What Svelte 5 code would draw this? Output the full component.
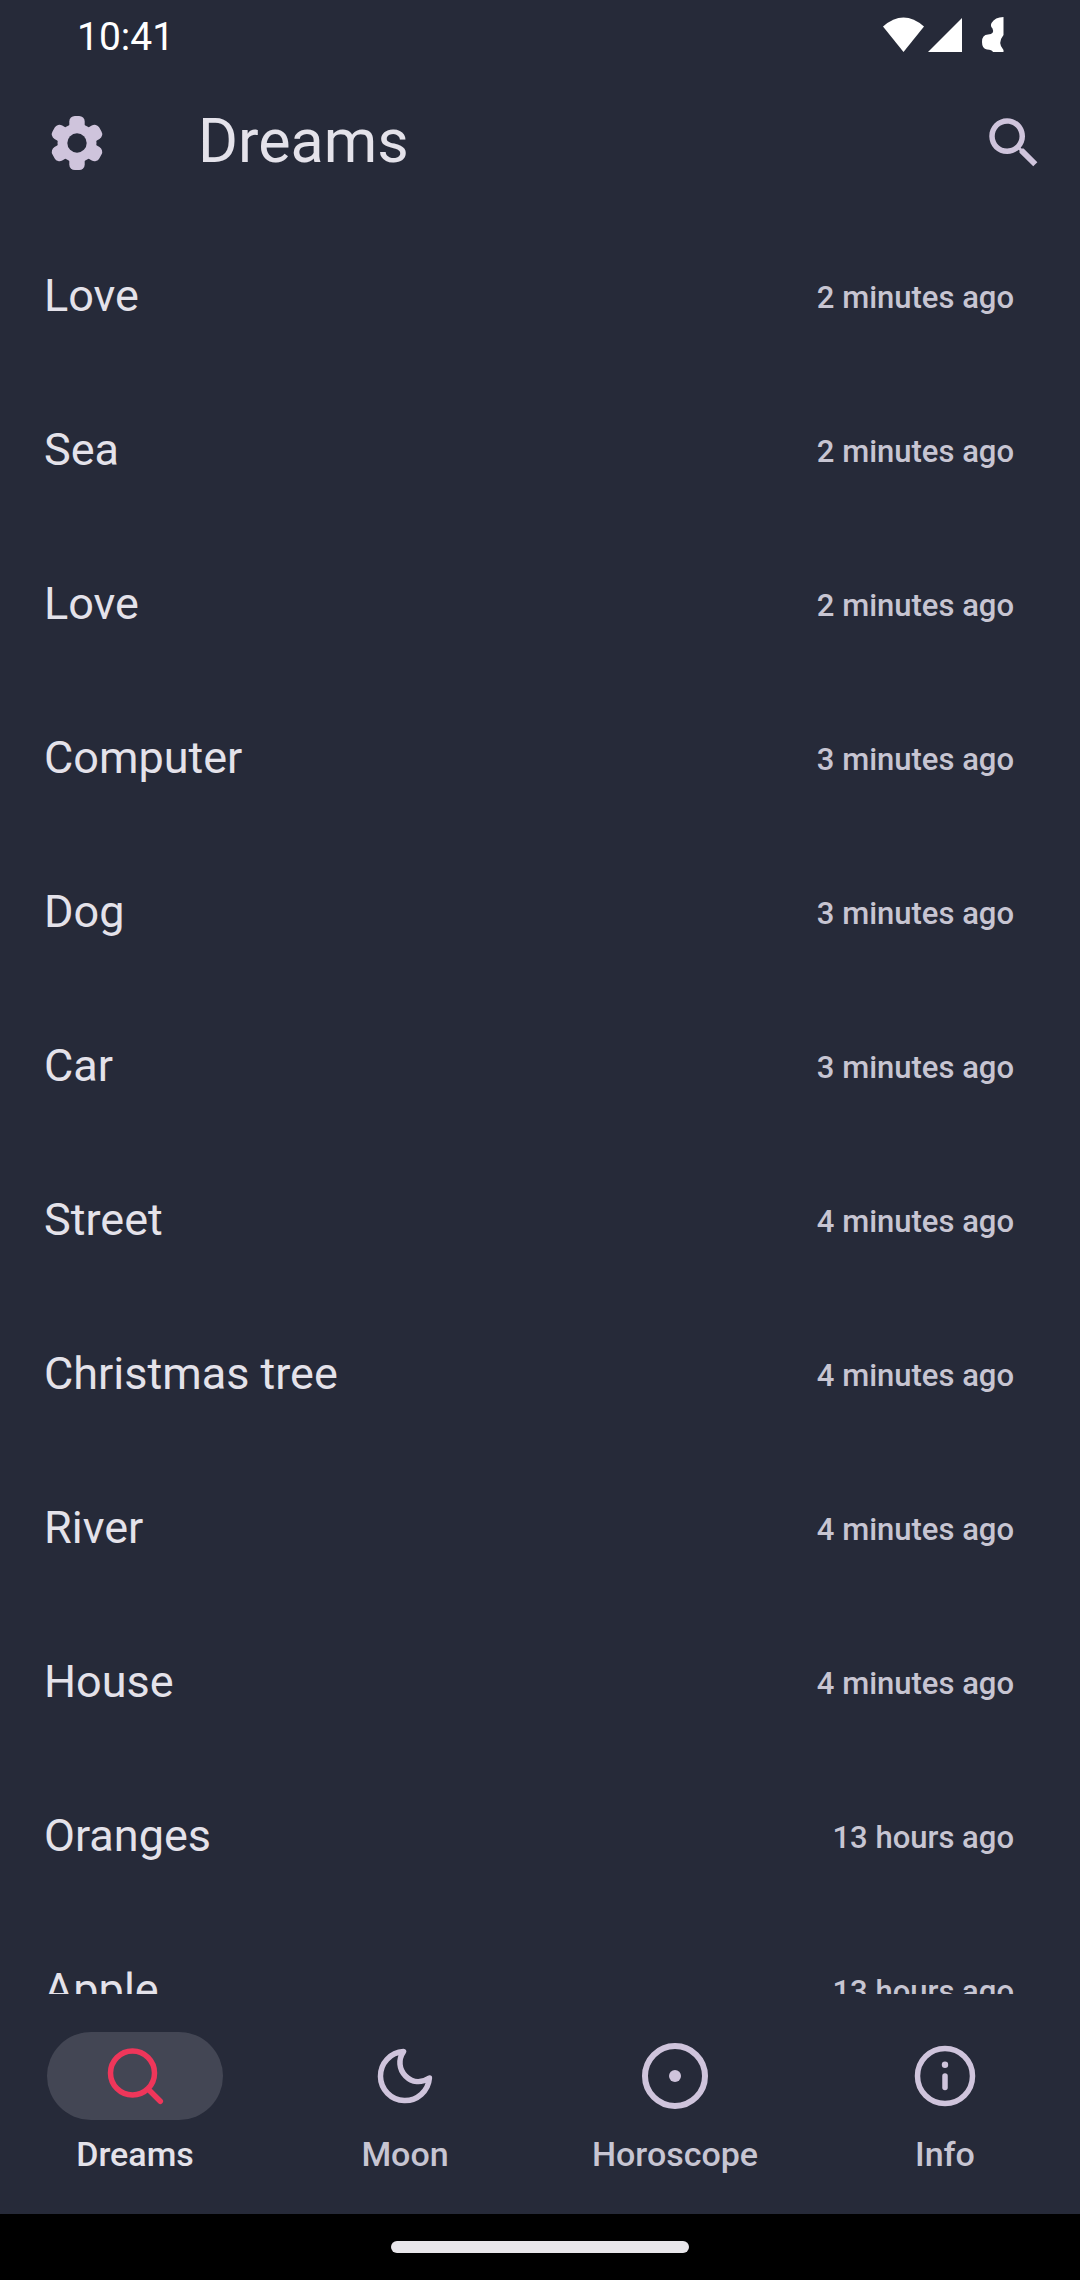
<script>
  const dreams = [
    ['Love', '2 minutes ago'],
    ['Sea', '2 minutes ago'],
    ['Love', '2 minutes ago'],
    ['Computer', '3 minutes ago'],
    ['Dog', '3 minutes ago'],
    ['Car', '3 minutes ago'],
    ['Street', '4 minutes ago'],
    ['Christmas tree', '4 minutes ago'],
    ['River', '4 minutes ago'],
    ['House', '4 minutes ago'],
    ['Oranges', '13 hours ago'],
    ['Apple', '13 hours ago'],
  ];
  const tabs = ['Dreams', 'Moon', 'Horoscope', 'Info'];
  let current = $state('Dreams');
</script>

<div class="screen">
  <div class="status">
    <span class="clock">10:41</span>
    <svg class="indicators" viewBox="0 0 122 36" aria-hidden="true">
      <path d="M0 9.500 Q20.500 -8.500 41 9.500 L20.500 35 Z" />
      <path d="M45 35 L79 1 V35 Z" />
      <path d="M120.500 0 V18 Q114 26 120.500 33 V35 H110 Q109 32.500 104 32.500 Q99 32 99 25 Q99 17.500 105 17.500 Q112 17 109.500 11.500 Q107 9 108.500 6 Q112 0 120.500 0 Z" />
    </svg>
  </div>

  <header>
    <button class="icon-button" aria-label="Settings">
      <svg viewBox="0 0 66 66">
        <mask id="gear-hole">
          <rect width="66" height="66" fill="white" />
          <circle cx="33" cy="33" r="9.700" fill="black" />
        </mask>
        <g mask="url(#gear-hole)">
          <circle cx="33" cy="33" r="19.500" />
          <rect x="25.300" y="6" width="15.400" height="54" rx="5.500" />
          <rect x="25.300" y="6" width="15.400" height="54" rx="5.500" transform="rotate(60 33 33)" />
          <rect x="25.300" y="6" width="15.400" height="54" rx="5.500" transform="rotate(120 33 33)" />
        </g>
      </svg>
    </button>
    <h1>Dreams</h1>
    <button class="icon-button" aria-label="Search">
      <svg viewBox="0 0 24 24">
        <path d="M15.5 14h-.79l-.28-.27C15.410 12.590 16 11.110 16 9.500 16 5.910 13.090 3 9.500 3S3 5.910 3 9.500 5.910 16 9.500 16c1.610 0 3.090-.59 4.230-1.570l.27.28v.79l5 4.990L20.490 19l-4.990-5zm-6 0C7.010 14 5 11.990 5 9.500S7.010 5 9.500 5 14 7.010 14 9.500 11.990 14 9.500 14z" />
      </svg>
    </button>
  </header>

  <main>
    <ul>
      {#each dreams as [name, time]}
        <li>
          <span class="name">{name}</span>
          <span class="time">{time}</span>
        </li>
      {/each}
    </ul>
  </main>

  <nav>
    {#each tabs as tab}
      <button class="tab" class:active={current === tab} onclick={() => (current = tab)}>
        <span class="pill">
          <svg viewBox="0 0 66 66">
            {#if tab === 'Dreams'}
              <circle cx="30.500" cy="30" r="22" />
              <path d="M46.500 46.500 L58.300 58.300" />
            {:else if tab === 'Moon'}
              <path d="M31.500 8.600 A24.500 24.500 0 1 0 57.400 35 C49 40.500 40 39.500 33.500 33 C27 26.500 26 16.500 31.500 8.600 Z" />
            {:else if tab === 'Horoscope'}
              <circle class="thick" cx="33" cy="33" r="30" />
              <circle class="solid" cx="33" cy="33" r="6" />
            {:else}
              <circle cx="33" cy="33" r="27.500" />
              <path d="M33 33 V44.500" />
              <circle class="solid" cx="33" cy="21.800" r="3.200" />
            {/if}
          </svg>
        </span>
        <span>{tab}</span>
      </button>
    {/each}
  </nav>

  <div class="gesture"><div class="handle"></div></div>
</div>

<style>
  :global(body) {
    background: #262a39;
  }
  .screen {
    display: flex;
    flex-direction: column;
    height: 100vh;
    background: #262a39;
    color: #e4e2ea;
    font-family: Roboto, sans-serif;
  }
  button {
    border: 0;
    padding: 0;
    background: none;
    color: inherit;
    font: inherit;
    cursor: pointer;
  }
  svg {
    display: block;
  }
  .status {
    display: flex;
    flex: none;
    align-items: flex-start;
    justify-content: space-between;
    height: 72px;
    padding: 17px 75px 0 77px;
    box-sizing: border-box;
    color: #fff;
  }
  .clock {
    font-size: 39px;
    line-height: 40px;
  }
  .indicators {
    width: 122px;
    height: 36px;
    fill: #fff;
  }
  header {
    display: flex;
    flex: none;
    align-items: center;
    height: 147px;
    padding: 0 33px 5px 44px;
    box-sizing: border-box;
  }
  .icon-button {
    width: 66px;
    height: 66px;
  }
  .icon-button svg {
    width: 66px;
    height: 66px;
    fill: #cfc4dc;
  }
  h1 {
    flex: 1;
    margin: 0 0 0 88px;
    padding-bottom: 4px;
    font-size: 61px;
    line-height: 76px;
    font-weight: 400;
  }
  main {
    flex: 1;
    min-height: 0;
    overflow: hidden;
  }
  ul {
    margin: 0;
    padding: 0;
    list-style: none;
  }
  li {
    display: flex;
    align-items: center;
    justify-content: space-between;
    height: 154px;
    padding: 0 66px 0 44px;
  }
  .name {
    font-size: 45px;
    line-height: 66px;
  }
  .time {
    padding-top: 4px;
    color: #c7c5d2;
    font-size: 31px;
    line-height: 44px;
    font-weight: 500;
  }
  nav {
    display: grid;
    grid-template-columns: repeat(4, 1fr);
    flex: none;
    height: 220px;
    padding-top: 38px;
    box-sizing: border-box;
  }
  .tab {
    display: flex;
    flex-direction: column;
    align-items: center;
    gap: 12px;
    color: #c7c5d2;
    font-size: 34px;
    line-height: 44px;
    font-weight: 500;
  }
  .tab.active {
    color: #e4e2ea;
  }
  .pill {
    display: flex;
    align-items: center;
    justify-content: center;
    width: 176px;
    height: 88px;
    border-radius: 44px;
  }
  .active .pill {
    background: #434654;
  }
  .pill svg {
    width: 66px;
    height: 66px;
    fill: none;
    stroke: #cfc4dc;
    stroke-width: 5.500;
    stroke-linecap: round;
    stroke-linejoin: round;
  }
  .active .pill svg {
    stroke: #ef365a;
  }
  .pill .thick {
    stroke-width: 6;
  }
  .pill .solid {
    fill: #cfc4dc;
    stroke: none;
  }
  .gesture {
    display: flex;
    flex: none;
    justify-content: center;
    height: 66px;
    padding-top: 27px;
    box-sizing: border-box;
    background: #000;
  }
  .handle {
    width: 298px;
    height: 12px;
    border-radius: 6px;
    background: #e8e6ea;
  }
</style>
